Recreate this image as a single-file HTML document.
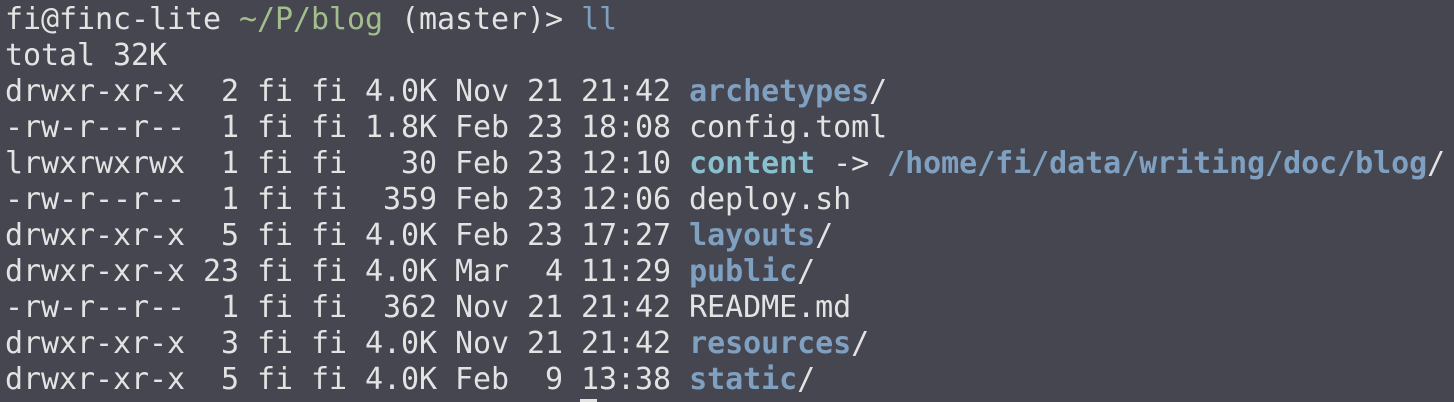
<!DOCTYPE html>
<html><head><style>
html,body{margin:0;padding:0;width:1454px;height:402px;overflow:hidden;background:#45464f;}
pre{margin:0;position:absolute;left:5px;top:2px;font-family:"DejaVu Sans Mono","Liberation Mono",monospace;font-size:30px;line-height:36px;letter-spacing:-0.06px;color:#e3e3e3;}
.g{color:#a3be8c}.b{color:#7f9fbf}.d{font-weight:bold;color:#7fa0c0}.c{color:#88c0d0;font-weight:bold}
.cur{position:absolute;left:580px;top:399px;width:17px;height:3px;background:#e3e3e3}
</style></head><body>
<pre>fi@finc-lite <span class="g">~/P/blog</span> (master)&gt; <span class="b">ll</span>
total 32K
drwxr-xr-x  2 fi fi 4.0K Nov 21 21:42 <span class="d">archetypes</span>/
-rw-r--r--  1 fi fi 1.8K Feb 23 18:08 config.toml
lrwxrwxrwx  1 fi fi   30 Feb 23 12:10 <span class="c">content</span> -&gt; <span class="d">/home/fi/data/writing/doc/blog</span>/
-rw-r--r--  1 fi fi  359 Feb 23 12:06 deploy.sh
drwxr-xr-x  5 fi fi 4.0K Feb 23 17:27 <span class="d">layouts</span>/
drwxr-xr-x 23 fi fi 4.0K Mar  4 11:29 <span class="d">public</span>/
-rw-r--r--  1 fi fi  362 Nov 21 21:42 README.md
drwxr-xr-x  3 fi fi 4.0K Nov 21 21:42 <span class="d">resources</span>/
drwxr-xr-x  5 fi fi 4.0K Feb  9 13:38 <span class="d">static</span>/</pre>
<div class="cur"></div>
</body></html>
